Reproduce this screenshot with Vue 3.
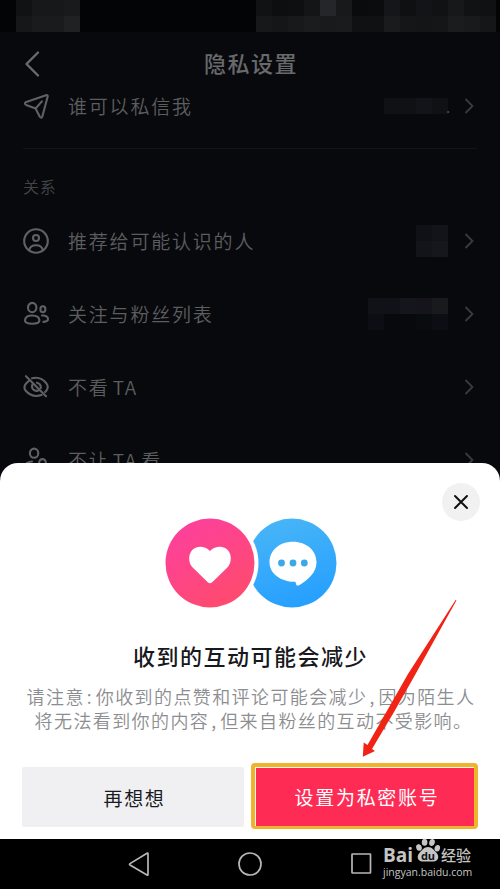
<script setup>
const statusLeft = ['#111214', '#17181a', '#17181a', '#191a1c', '#161719', '#1a1b1d', '#1a1b1d', '#202123']
const statusRight = [
  '#111214', '#0c0e10', '#0e0f11', '#141517', '#252629', '#18191b', '#090b0d', '#0b0c0e', '#151619', '#0e1012', '#131417', '#111214', '#16181a', '#101214', '#0f1113',
  '#17181a', '#151618', '#18191b', '#1b1c1e', '#191a1c', '#1a1b1d', '#101113', '#101113', '#1a1b1d', '#151618', '#141517', '#151618', '#1b1c1e', '#191a1c', '#151618',
]
const rows = [
  { icon: 'person', text: '推荐给可能认识的人', cols: 2, blocks: ['#101116', '#131419', '#13141a', '#16171c'] },
  { icon: 'people', text: '关注与粉丝列表', cols: 5, blocks: ['#111217', '#111217', '#15161b', '#15141a', '#191a1e', '#0d0e13', '#08090d', '#08090d', '#0a0b0f', '#0d0e13'] },
  { icon: 'eye', text: '不看 TA', cols: 0, blocks: [] },
  { icon: 'hide', text: '不让 TA 看', cols: 0, blocks: [] },
]
</script>

<template>
  <main class="phone">
    <div class="status">
      <div class="mosaic m4"><i v-for="(c, i) in statusLeft" :key="i" :style="{ background: c }"></i></div>
      <div class="mosaic m15"><i v-for="(c, i) in statusRight" :key="i" :style="{ background: c }"></i></div>
    </div>
    <header class="header">
      <svg class="back" viewBox="0 0 18 28"><path d="M15 2.500 3.500 14 15 25.500" /></svg>
      <h1>隐私设置</h1>
    </header>
    <section class="settings">
      <div class="row first">
        <svg class="icon" viewBox="0 0 28 28"><path d="M3.600 10.300 24 3.200q2-.6 1.700 1.400l-5.300 19.600q-.8 2.500-2.500.7l-4.300-8.400-9.500-3.600q-2.200-1.200-.5-2.600ZM13.600 16.500l6.300-7.100" /></svg>
        <span class="label">谁可以私信我</span>
        <div class="mosaic m4 short"><i class="b1"></i><i class="b1"></i><i class="b2"></i><i class="b1"></i></div>
        <span class="dot">.</span>
        <svg class="chevron" viewBox="0 0 10 16"><path d="m1.500 1 7 7-7 7" /></svg>
      </div>
      <div class="divider"></div>
      <h2>关系</h2>
      <div v-for="row in rows" :key="row.icon" class="row">
        <svg v-if="row.icon === 'person'" class="icon" viewBox="0 0 28 28"><circle cx="14" cy="14" r="11.800" /><circle cx="14" cy="11" r="3" /><path d="M7.300 23q.8-4.700 6.700-4.700t6.700 4.700" /></svg>
        <svg v-else-if="row.icon === 'people'" class="icon" viewBox="0 0 28 28"><ellipse cx="10.200" cy="7.600" rx="4.200" ry="4.700" /><path d="M3 20.500c0-3.400 3-5 7.200-5s7.200 1.600 7.200 5q0 3.200-7.200 3.200T3 20.500Z" /><ellipse cx="20.900" cy="9.300" rx="2.500" ry="3" /><path d="M20 15.500c4-.3 6 1.300 6 3.600q0 2.700-4.600 2.800" /></svg>
        <svg v-else-if="row.icon === 'eye'" class="icon" viewBox="0 0 28 28"><path d="M10 5.200q9-2 14.500 5.300 2.400 3.500 0 6.800l-1.300 1.700M19.500 22.100q-9.500 3-16-4.600-2.400-3.500.6-7l2.600-2.600M4 3.200l20 20M15 9.700q4.300 1.400 3.700 5.300M10.500 11.500q-1.300 2.700.8 5 2 2 4.700 1.200" /></svg>
        <svg v-else class="icon" viewBox="0 0 28 28"><ellipse cx="12.100" cy="7.200" rx="4.200" ry="4.600" /><path d="M10 15.500c-5 .5-7 3-7 5.500q0 3 9 3M17.200 19v-2.600a3.300 3.300 0 0 1 6.600 0V19M15.500 19h10v6h-10Z" /></svg>
        <span class="label">{{ row.text }}</span>
        <div v-if="row.cols" class="mosaic value" :class="'m' + row.cols"><i v-for="(c, i) in row.blocks" :key="i" :style="{ background: c }"></i></div>
        <svg class="chevron" viewBox="0 0 10 16"><path d="m1.500 1 7 7-7 7" /></svg>
      </div>
    </section>

    <section class="sheet">
      <div class="top">
        <button class="close"><svg viewBox="0 0 16 16"><path d="m2 2 12 12M14 2 2 14" /></svg></button>
      </div>
      <svg class="badges" viewBox="0 0 172 92">
        <defs>
          <linearGradient id="pink" x1=".2" y1="0" x2=".8" y2="1"><stop stop-color="#fc409e" /><stop offset="1" stop-color="#ff4b6b" /></linearGradient>
          <linearGradient id="blue" x1=".3" y1="0" x2=".6" y2="1"><stop stop-color="#48b5f7" /><stop offset="1" stop-color="#259fff" /></linearGradient>
        </defs>
        <circle cx="127" cy="46" r="44.500" fill="url(#blue)" />
        <circle cx="45" cy="46" r="48.500" fill="#fff" />
        <circle cx="45" cy="46" r="44.500" fill="url(#pink)" />
        <path d="M45 66.200q-1.200 0-2.500-1.300L27.400 50.300C23.400 46 23 38 27 33.300c4.400-5 12.700-4.600 18 .6 5.300-5.200 13.600-5.600 18-.6 4 4.700 3.600 12.700-.4 17L47.500 64.900Q46.200 66.200 45 66.200Z" fill="#fff" />
        <path d="M128 24.800c13.500 0 23.500 8.700 23.500 20.500 0 10.500-8.500 17.500-17 22.700-1.700 1-3 .8-3.400-.8l-.7-2.400c-13.700.4-25.900-7.600-25.900-19.500s10-20.500 23.500-20.500Z" fill="#fff" />
        <g fill="#3ca8e8"><circle cx="116.500" cy="46" r="3.400" /><circle cx="128" cy="46" r="3.400" /><circle cx="139.300" cy="46" r="3.400" /></g>
      </svg>
      <h3>收到的互动可能会减少</h3>
      <p>请注意<span class="p">:</span>你收到的点赞和评论可能会减少<span class="p">,</span>因为陌生人<br>将无法看到你的内容<span class="p">,</span>但来自粉丝的互动不受影响<span class="stop">。</span></p>
      <div class="actions">
        <button class="cancel">再想想</button>
        <button class="confirm">设置为私密账号</button>
      </div>
      <svg class="arrow" viewBox="0 0 100 160"><path d="M94.500 1.300 93.600 1 46 75 5.500 146 1.700 143.500.8 157.800 13 152 10 150 32 113 53 76Z" /></svg>
    </section>

    <nav class="nav">
      <svg viewBox="0 0 300 50"><path d="M48 14.500v21q0 1-1 .5L30 26q-1-.7 0-1.400l17-10.300q1-.6 1 .2Z" /><circle cx="150" cy="25" r="11" /><rect x="252" y="15" width="18.500" height="19" rx=".5" /></svg>
    </nav>
    <div class="watermark">
      <div class="brand">
        <span class="bai">Bai</span>
        <svg class="paw" viewBox="0 0 26 28"><ellipse cx="4" cy="9.500" rx="2.800" ry="3.300" transform="rotate(-15 4 9.500)" /><ellipse cx="9.600" cy="4.300" rx="2.800" ry="3.500" /><ellipse cx="17" cy="4.500" rx="2.800" ry="3.500" transform="rotate(12 17 4.500)" /><ellipse cx="22.300" cy="10.300" rx="2.700" ry="3.300" transform="rotate(15 22.300 10.300)" /><path d="M13 9c4 0 5.500 3 8 5.200 4 3.600 2.500 9.300-2.500 9.300h-11C2.500 23.500 1 17.800 5 14.200 7.500 12 9 9 13 9Z" /><text x="13" y="21.500" text-anchor="middle">du</text></svg>
        <span class="jing">经验</span>
      </div>
      <div class="url">jingyan.baidu.com</div>
    </div>
  </main>
</template>

<style>
body { margin: 0; background: #000; }
</style>

<style scoped>
* { box-sizing: border-box; }
.phone { position: relative; width: 500px; height: 889px; overflow: hidden; display: flex; flex-direction: column; background: #08090d; color: #68696b; font-family: "Noto Sans CJK SC", sans-serif; }
h1, h2, h3, p { margin: 0; }
.status { height: 32px; flex: none; background: #030405; display: flex; justify-content: space-between; padding: 0 4px 0 16px; }
.mosaic { display: grid; grid-auto-rows: 16px; align-content: start; }
.m2 { grid-template-columns: repeat(2, 16px); }
.m4 { grid-template-columns: repeat(4, 16px); }
.m5 { grid-template-columns: repeat(5, 16px); }
.m15 { grid-template-columns: repeat(15, 16px); }
.header { height: 64px; flex: none; display: grid; grid-template-columns: 100px 1fr 100px; align-items: center; }
.back { width: 18px; height: 28px; margin-left: 23px; fill: none; stroke: #696a6c; stroke-width: 2.400; stroke-linecap: round; stroke-linejoin: round; }
h1 { text-align: center; font-size: 22px; line-height: 32px; font-weight: 500; letter-spacing: 1.500px; padding: 0 0 4px 2px; }
.settings { display: flex; flex-direction: column; }
.row { height: 73px; display: flex; align-items: center; padding: 0 26px 0 22px; }
.row.first { height: 20px; }
.icon { width: 28px; height: 28px; margin-right: 18px; flex: none; fill: none; stroke: #606163; stroke-width: 2.100; stroke-linecap: round; stroke-linejoin: round; }
.label { flex: 1; font-size: 19px; line-height: 28px; font-weight: 350; letter-spacing: 1.800px; word-spacing: -3px; white-space: nowrap; color: #5c5d5f; }
.chevron { width: 10px; height: 16px; flex: none; fill: none; stroke: #3a3b3e; stroke-width: 1.800; }
.value { margin-right: 16px; }
.short { margin-right: -2px; }
.b1 { background: #101115; }
.b2 { background: #131419; }
.dot { width: 4px; margin-right: 14px; font-size: 15px; color: #4b4c4f; }
.divider { height: 1px; margin: 32px 23px 0; background: #131418; }
h2 { height: 55px; margin: 0 0 0 23px; padding-top: 24px; font-size: 16px; line-height: 26px; font-weight: 350; letter-spacing: .700px; color: #434447; }
.sheet { position: absolute; left: 0; top: 463px; width: 500px; height: 376px; background: #fff; border-radius: 18px 18px 0 0; display: flex; flex-direction: column; align-items: center; }
.top { align-self: stretch; height: 54px; padding: 20px 20px 0; display: flex; justify-content: flex-end; }
button { border: 0; padding: 0; font-family: inherit; }
.close { width: 38px; height: 38px; border-radius: 50%; background: #f1f1f2; display: grid; place-items: center; }
.close svg { width: 16px; height: 16px; fill: none; stroke: #111; stroke-width: 2; stroke-linecap: round; }
.badges { width: 172px; height: 92px; flex: none; overflow: visible; margin-left: 1px; }
h3 { margin-top: 30px; height: 32px; line-height: 32px; font-size: 22px; letter-spacing: 1.500px; font-weight: 500; color: #171820; padding-left: 1px; }
p { margin-top: 14px; padding-left: 2px; font-size: 18px; line-height: 23.500px; letter-spacing: 1.400px; font-weight: 350; text-align: center; white-space: nowrap; color: #8c8d90; }
.p { display: inline-block; width: 11px; text-align: left; padding-left: 2px; }
.stop { margin-right: -5px; }
.actions { align-self: stretch; display: grid; grid-template-columns: 222px 227px; gap: 7px; margin-top: 31px; padding-left: 22px; align-items: center; }
.actions button { font-size: 19px; letter-spacing: 1.700px; color: #191a22; padding-left: 3px; }
.cancel { height: 60px; background: #f0f0f2; border-radius: 2px; position: relative; top: 1px; }
.confirm { height: 66px; background: #fe2c55; border: solid #efb42c; border-width: 4px 4px 3px; border-radius: 4px; box-shadow: inset 1px 1px #fff5ea; }
.actions .confirm { color: #fff; padding-left: 5px; }
.arrow { position: absolute; left: 362px; top: 136px; width: 100px; height: 160px; fill: #f02315; pointer-events: none; }
.nav { position: absolute; left: 0; bottom: 0; width: 500px; height: 50px; background: #000; display: flex; justify-content: center; }
.nav svg { width: 300px; height: 50px; fill: none; stroke: #b7b7b7; stroke-width: 1.700; }
.watermark { position: absolute; left: 383px; top: 838px; width: 92px; color: #c5c5c5; font-family: "Open Sans", "Noto Sans CJK SC", sans-serif; }
.brand { height: 28px; display: flex; align-items: flex-end; }
.bai { width: 32px; font-size: 19px; line-height: 22px; font-weight: 700; }
.paw { width: 26px; height: 28px; fill: #c5c5c5; }
.paw text { font: 700 11px "Open Sans", sans-serif; fill: #101010; }
.jing { font-size: 15px; line-height: 22px; font-weight: 500; white-space: nowrap; }
.url { font-size: 10.500px; line-height: 12px; white-space: nowrap; }
</style>
